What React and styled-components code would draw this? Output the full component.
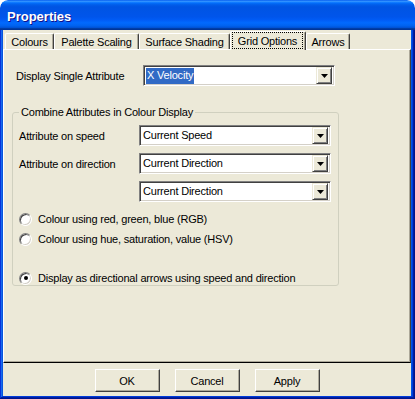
import React from 'react';
import styled, { createGlobalStyle } from 'styled-components';

const GlobalStyle = createGlobalStyle`
  html, body { margin: 0; padding: 0; background: #ffffff; }
  body {
    font-family: "Liberation Sans", Arial, sans-serif;
    font-size: 11px;
    letter-spacing: -0.2px;
    color: #000;
  }
  * { box-sizing: border-box; }
`;

const Window = styled.div`
  width: 415px;
  height: 399px;
  display: flex;
  flex-direction: column;
  border-radius: 8px 8px 0 0;
  overflow: hidden;
`;

const TitleBar = styled.div`
  height: 30px;
  flex: none;
  display: flex;
  align-items: center;
  padding: 2px 0 0 7px;
  border-radius: 8px 8px 0 0;
  background: linear-gradient(180deg, #0058ee 0%, #3593ff 4%, #288eff 6%, #127dff 8%, #036ffc 10%, #0262ee 14%, #0057e5 20%, #0054e3 24%, #0055eb 56%, #005bf5 66%, #026afe 76%, #0062ef 86%, #0052d6 92%, #0040ab 94%, #003092 100%);
`;

const Title = styled.span`
  font-family: "Liberation Sans", Arial, sans-serif;
  font-weight: bold;
  font-size: 13px;
  letter-spacing: 0;
  color: #fff;
  text-shadow: 1px 1px #0f1089;
`;

const Frame = styled.div`
  flex: 1;
  display: flex;
  padding: 0 4px 3px 3px;
  background: #0055e5;
  box-shadow: inset -1px -1px #00138c, inset 1px 0 #0831d9, inset -2px -2px #001ea0,
    inset 2px 0 #166aee, inset -3px -3px #003bda, inset 3px 0 #0855dd;
`;

const Body = styled.div`
  flex: 1;
  display: flex;
  flex-direction: column;
  background: #ece9d8;
`;

const TabStrip = styled.div`
  display: flex;
  align-items: flex-end;
  height: 18px;
  margin-top: 1px;
  padding-left: 2px;
  position: relative;
  z-index: 1;
`;

const Tab = styled.div`
  width: ${(p) => p.w}px;
  height: ${(p) => (p.active ? 19 : 16)}px;
  margin-bottom: ${(p) => (p.active ? -1 : 0)}px;
  display: flex;
  align-items: center;
  justify-content: center;
  background: #ece9d8;
  border-top: 1px solid #fff;
  border-left: 1px solid #fff;
  border-right: 1px solid #404040;
  box-shadow: inset -1px 0 #aca899;
  border-radius: 2px 2px 0 0;
  padding: ${(p) => (p.active ? '0 2px 1px 1px' : '0')};
  white-space: nowrap;
`;

const Focus = styled.div`
  flex: 1;
  align-self: stretch;
  display: flex;
  align-items: center;
  justify-content: center;
  border: 1px dotted #000;
`;

const Panel = styled.div`
  flex: 1;
  display: flex;
  flex-direction: column;
  align-items: flex-start;
  padding: 15px 0 0 8px;
  border-top: 1px solid #fff;
  border-left: 1px solid #fff;
  border-right: 1px solid #404040;
  border-bottom: 1px solid #000;
  box-shadow: inset -1px -1px #aca899;
`;

const TopRow = styled.div`
  display: flex;
  align-items: center;
  height: 21px;
  padding-left: 4px;
`;

const Label = styled.span`
  width: ${(p) => p.w}px;
  flex: none;
  white-space: nowrap;
`;

const Combo = styled.div`
  width: 192px;
  height: 21px;
  display: flex;
  align-items: center;
  padding: 2px;
  background: #fff;
  border: 1px solid;
  border-color: #808080 #fff #fff #808080;
  box-shadow: inset 1px 1px #404040, inset -1px -1px #d4d0c8;
`;

const ComboText = styled.div`
  flex: 1;
  display: flex;
  align-items: center;
  white-space: nowrap;
`;

const Value = styled.span`
  padding: 1px 1px 2px 1px;
  line-height: 13px;
  background: ${(p) => (p.selected ? '#316ac5' : 'transparent')};
  color: ${(p) => (p.selected ? '#fff' : '#000')};
`;

const DropButton = styled.div`
  width: 16px;
  height: 17px;
  flex: none;
  display: flex;
  align-items: center;
  justify-content: center;
  background: #ece9d8;
  border: 1px solid;
  border-color: #ece9d8 #404040 #404040 #ece9d8;
  box-shadow: inset 1px 1px #fff, inset -1px -1px #808080;
`;

const GroupBox = styled.fieldset`
  width: 327px;
  margin: 20px 0 0 0;
  padding: 6px 0 0 6px;
  border: 1px solid #d0d0bf;
  border-radius: 3px;
  min-width: 0;
`;

const Legend = styled.legend`
  padding: 0 2px;
  line-height: 13px;
`;

const FieldRow = styled.div`
  display: flex;
  align-items: center;
  height: 21px;
  margin-bottom: 7px;
`;

const RadioRow = styled.label`
  display: flex;
  align-items: center;
  height: 14px;
  margin-top: ${(p) => p.mt}px;
  margin-bottom: ${(p) => p.mb || 0}px;
  white-space: nowrap;
`;

const RadioCircle = styled.span`
  width: 13px;
  height: 13px;
  flex: none;
  margin-right: 6px;
  border-radius: 50%;
  background: #fff;
  border: 1px solid;
  border-color: #808080 #fff #fff #808080;
  box-shadow: inset 1px 1px #404040, inset -1px -1px #d4d0c8;
  display: flex;
  align-items: center;
  justify-content: center;
  &::after {
    content: '';
    width: 4px;
    height: 4px;
    border-radius: 50%;
    background: ${(p) => (p.checked ? '#000' : 'transparent')};
  }
`;

const ButtonBar = styled.div`
  height: 33px;
  flex: none;
  display: flex;
  justify-content: center;
  gap: 15px;
  padding-top: 6px;
`;

const Button = styled.button`
  width: 65px;
  height: 23px;
  font-family: "Liberation Sans", Arial, sans-serif;
  font-size: 11px;
  letter-spacing: -0.2px;
  color: #000;
  background: #ece9d8;
  border: 1px solid;
  border-color: #fff #404040 #404040 #fff;
  box-shadow: inset -1px -1px #aca899;
  padding: 0;
`;

const Arrow = () => (
  <svg width="7" height="4" viewBox="0 0 7 4">
    <path d="M0 0H7L3.5 4Z" fill="#000" />
  </svg>
);

const ComboBox = ({ value, selected }) => (
  <Combo>
    <ComboText>
      <Value selected={selected}>{value}</Value>
    </ComboText>
    <DropButton>
      <Arrow />
    </DropButton>
  </Combo>
);

const tabs = [
  { label: 'Colours', w: 49 },
  { label: 'Palette Scaling', w: 85 },
  { label: 'Surface Shading', w: 91 },
  { label: 'Grid Options', w: 76, active: true },
  { label: 'Arrows', w: 44 },
];

export default function App() {
  return (
    <>
      <GlobalStyle />
      <Window>
        <TitleBar>
          <Title>Properties</Title>
        </TitleBar>
        <Frame>
          <Body>
            <TabStrip>
              {tabs.map((t) => (
                <Tab key={t.label} w={t.w} active={t.active}>
                  {t.active ? <Focus>{t.label}</Focus> : t.label}
                </Tab>
              ))}
            </TabStrip>
            <Panel>
              <TopRow>
                <Label w={127}>Display Single Attribute</Label>
                <ComboBox value="X Velocity" selected />
              </TopRow>
              <GroupBox>
                <Legend>Combine Attributes in Colour Display</Legend>
                <FieldRow>
                  <Label w={120}>Attribute on speed</Label>
                  <ComboBox value="Current Speed" />
                </FieldRow>
                <FieldRow>
                  <Label w={120}>Attribute on direction</Label>
                  <ComboBox value="Current Direction" />
                </FieldRow>
                <FieldRow>
                  <Label w={120} />
                  <ComboBox value="Current Direction" />
                </FieldRow>
                <RadioRow mt={10}>
                  <RadioCircle />
                  Colour using red, green, blue (RGB)
                </RadioRow>
                <RadioRow mt={6}>
                  <RadioCircle />
                  Colour using hue, saturation, value (HSV)
                </RadioRow>
                <RadioRow mt={25} mb={0}>
                  <RadioCircle checked />
                  Display as directional arrows using speed and direction
                </RadioRow>
              </GroupBox>
            </Panel>
            <ButtonBar>
              <Button>OK</Button>
              <Button>Cancel</Button>
              <Button>Apply</Button>
            </ButtonBar>
          </Body>
        </Frame>
      </Window>
    </>
  );
}
